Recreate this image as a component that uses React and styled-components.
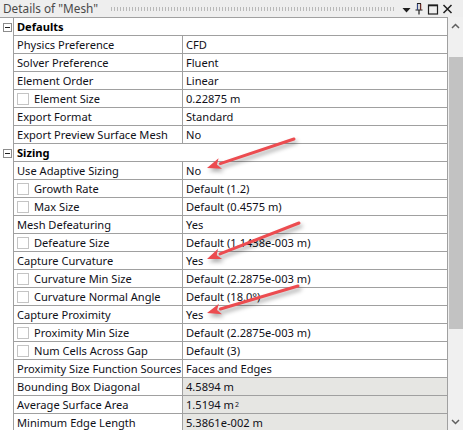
import React from 'react'
import styled, { createGlobalStyle } from 'styled-components'

const GlobalStyle = createGlobalStyle`
  html, body { margin: 0; padding: 0; background: #ffffff; }
  body { font-family: "Noto Sans", "Liberation Sans", sans-serif; }
`;

const Panel = styled.div`
  position: relative;
  width: 463px;
  height: 430px;
  overflow: hidden;
  display: flex;
  flex-direction: column;
  background: #ffffff;
`;

const TitleBar = styled.div`
  height: 17px;
  flex: none;
  display: flex;
  align-items: center;
  background: #eeeeee;
  padding-left: 3px;
`;

const Title = styled.span`
  font-size: 11.8px;
  color: #4a4a4a;
  white-space: nowrap;
  line-height: 17px;
`;

const Grip = styled.div`
  flex: 1;
  height: 4px;
  margin: 0 6px 0 12px;
  background-image: radial-gradient(circle, #b8b8b8 0.6px, transparent 0.9px);
  background-size: 3px 2px;
`;

const TitleIcons = styled.div`
  display: flex;
  align-items: center;
  gap: 3px;
  padding-right: 10px;
  height: 17px;
`;

const Body = styled.div`
  flex: 1;
  display: flex;
  min-height: 0;
`;

const Grid = styled.div`
  width: 448px;
  flex: none;
  border-top: 1px solid #a0a0a0;
`;

const Row = styled.div`
  display: grid;
  grid-template-columns: 13px 170px 265px;
  height: 18px;
`;

const Gutter = styled.div`
  display: flex;
  align-items: center;
  justify-content: center;
  padding-left: 2px;
`;

const Cell = styled.div`
  box-sizing: border-box;
  height: 18px;
  border-bottom: 1px solid #a0a0a0;
  border-right: 1px solid #a0a0a0;
  border-left: ${p => (p.$first ? '1px solid #a0a0a0' : 'none')};
  background: ${p => (p.$shaded ? '#e6e6e3' : '#ffffff')};
  display: flex;
  align-items: center;
  padding-left: 3px;
  font-size: 11.1px;
  line-height: 17px;
  color: #101018;
  white-space: nowrap;
  overflow: hidden;
`;

const HeaderCell = styled(Cell)`
  grid-column: 2 / span 2;
  border-left: 1px solid #a0a0a0;
  font-weight: 700;
  color: #000000;
`;

const Expander = styled.div`
  width: 9px;
  height: 9px;
  box-sizing: border-box;
  border: 1px solid #8c8c8c;
  background: #ffffff;
  position: relative;
  &::after {
    content: '';
    position: absolute;
    left: 1px;
    right: 1px;
    top: 3px;
    height: 1px;
    background: #202020;
  }
`;

const Check = styled.span`
  width: 12px;
  height: 12px;
  box-sizing: border-box;
  border: 1px solid #c4c4c4;
  background: #ffffff;
  margin: 0 5px 0 0;
  flex: none;
`;

const Sup = styled.sup`
  font-size: 7px;
  line-height: 0;
  margin-left: 1px;
`;

const Scrollbar = styled.div`
  width: 15px;
  flex: none;
  background: #f0f0f0;
  display: flex;
  flex-direction: column;
  align-items: center;
`;

const ScrollButton = styled.div`
  height: 17px;
  width: 15px;
  display: flex;
  align-items: center;
  justify-content: center;
  flex: none;
`;

const Thumb = styled.div`
  width: 14px;
  margin-left: 1px;
  height: 272px;
  background: #c2c2c2;
  margin-top: 23px;
`;

const Spacer = styled.div`
  flex: 1;
`;

const Overlay = styled.svg`
  position: absolute;
  left: 0;
  top: 0;
  pointer-events: none;
  overflow: visible;
  filter: drop-shadow(2px 3px 2px rgba(0, 0, 0, 0.35));
`;

const rows = [
  { head: 'Defaults' },
  { label: 'Physics Preference', value: 'CFD' },
  { label: 'Solver Preference', value: 'Fluent' },
  { label: 'Element Order', value: 'Linear' },
  { label: 'Element Size', value: '0.22875 m', check: true },
  { label: 'Export Format', value: 'Standard' },
  { label: 'Export Preview Surface Mesh', value: 'No' },
  { head: 'Sizing' },
  { label: 'Use Adaptive Sizing', value: 'No' },
  { label: 'Growth Rate', value: 'Default (1.2)', check: true },
  { label: 'Max Size', value: 'Default (0.4575 m)', check: true },
  { label: 'Mesh Defeaturing', value: 'Yes' },
  { label: 'Defeature Size', value: 'Default (1.1438e-003 m)', check: true },
  { label: 'Capture Curvature', value: 'Yes' },
  { label: 'Curvature Min Size', value: 'Default (2.2875e-003 m)', check: true },
  { label: 'Curvature Normal Angle', value: 'Default (18.0°)', check: true },
  { label: 'Capture Proximity', value: 'Yes' },
  { label: 'Proximity Min Size', value: 'Default (2.2875e-003 m)', check: true },
  { label: 'Num Cells Across Gap', value: 'Default (3)', check: true },
  { label: 'Proximity Size Function Sources', value: 'Faces and Edges' },
  { label: 'Bounding Box Diagonal', value: '4.5894 m', shaded: true },
  { label: 'Average Surface Area', value: <>1.5194 m<Sup>2</Sup></>, shaded: true },
  { label: 'Minimum Edge Length', value: '5.3861e-002 m', shaded: true },
];

// red call-out arrows, [from x, from y, tip x, tip y]
const arrows = [
  [294, 139, 207, 168],
  [299, 223, 207, 259],
  [298, 286, 207, 313],
];

const Arrow = ({ x1, y1, x2, y2 }) => {
  const a = Math.atan2(y2 - y1, x2 - x1);
  const len = 14;
  const w = 5.5;
  const bx = x2 - len * Math.cos(a);
  const by = y2 - len * Math.sin(a);
  const px = -Math.sin(a) * w;
  const py = Math.cos(a) * w;
  const nx = bx + len * 0.25 * Math.cos(a);
  const ny = by + len * 0.25 * Math.sin(a);
  return (
    <g>
      <line x1={x1} y1={y1} x2={bx} y2={by} stroke="#ec4c50" strokeWidth="3" strokeLinecap="round" />
      <polygon points={`${x2},${y2} ${bx + px},${by + py} ${nx},${ny} ${bx - px},${by - py}`} fill="#ec4c50" />
    </g>
  );
};

const Label = ({ row }) => (
  <Cell $first>
    {row.check && <Check />}
    {row.label}
  </Cell>
);

export default function App() {
  return (
    <Panel>
      <GlobalStyle />
      <TitleBar>
        <Title>Details of "Mesh"</Title>
        <Grip />
        <TitleIcons>
          <svg width="9" height="12" viewBox="0 0 9 12">
            <path d="M0.5 5 L8.5 5 L4.5 9.5 Z" fill="#1e1e1e" />
          </svg>
          <svg width="10" height="13" viewBox="0 0 10 13">
            <path d="M3 1.5 H7 M3.5 1.5 V8 M6.5 1.5 V8 M1.5 8 H8.5 M5 8 V12.5" stroke="#1e1e1e" strokeWidth="1.2" fill="none" />
            <path d="M3.5 2 V8" stroke="#3a5fd0" strokeWidth="0.6" />
            <path d="M6.8 2 V8" stroke="#d04a3a" strokeWidth="0.6" />
          </svg>
          <svg width="12" height="12" viewBox="0 0 12 12">
            <rect x="1.5" y="2" width="9" height="9" stroke="#1e1e1e" strokeWidth="1.2" fill="none" />
            <path d="M1.5 2.6 H10.5" stroke="#1e1e1e" strokeWidth="1.4" />
          </svg>
          <svg width="11" height="12" viewBox="0 0 11 12">
            <path d="M1.5 2 L9.5 10 M9.5 2 L1.5 10" stroke="#1e1e1e" strokeWidth="1.5" />
          </svg>
        </TitleIcons>
      </TitleBar>
      <Body>
        <Grid>
          {rows.map((row, i) =>
            row.head ? (
              <Row key={i}>
                <Gutter><Expander /></Gutter>
                <HeaderCell>{row.head}</HeaderCell>
              </Row>
            ) : (
              <Row key={i}>
                <Gutter />
                <Label row={row} />
                <Cell $shaded={row.shaded}>{row.value}</Cell>
              </Row>
            )
          )}
        </Grid>
        <Scrollbar>
          <ScrollButton>
            <svg width="9" height="6" viewBox="0 0 9 6">
              <path d="M1 5 L4.5 1.5 L8 5" stroke="#606060" strokeWidth="1.5" fill="none" />
            </svg>
          </ScrollButton>
          <Thumb />
          <Spacer />
          <ScrollButton>
            <svg width="9" height="6" viewBox="0 0 9 6">
              <path d="M1 1 L4.5 4.5 L8 1" stroke="#606060" strokeWidth="1.5" fill="none" />
            </svg>
          </ScrollButton>
        </Scrollbar>
      </Body>
      <Overlay width="463" height="430">
        {arrows.map(([x1, y1, x2, y2], i) => (
          <Arrow key={i} x1={x1} y1={y1} x2={x2} y2={y2} />
        ))}
      </Overlay>
    </Panel>
  );
}
